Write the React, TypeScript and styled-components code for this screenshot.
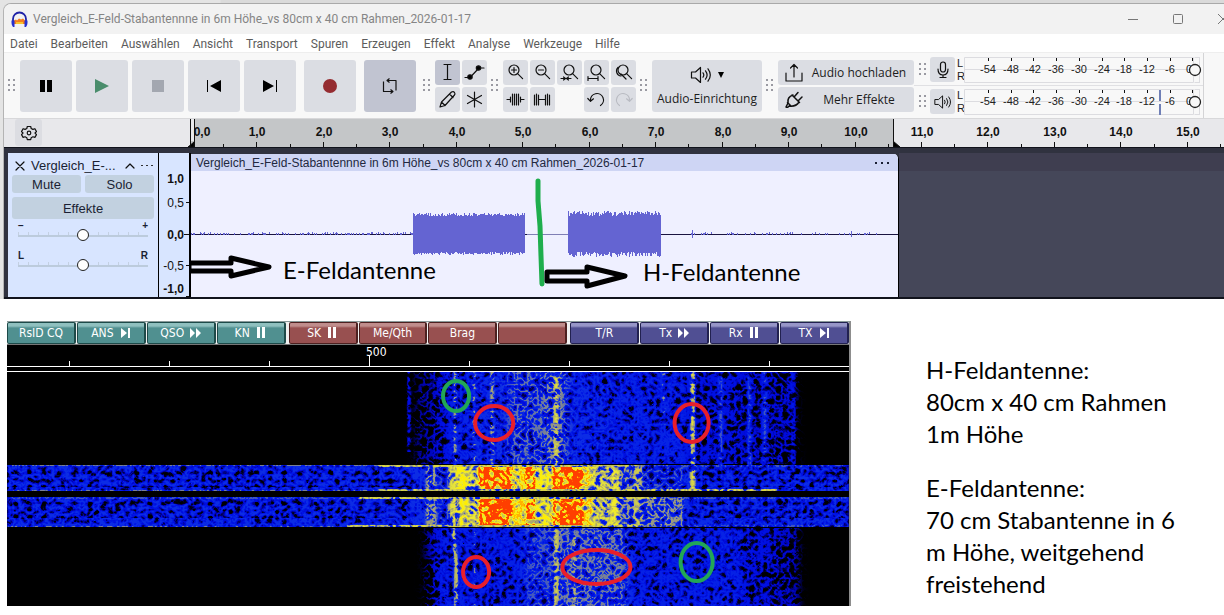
import React from "react";
import styled, { createGlobalStyle, css } from "styled-components";

const Global = createGlobalStyle`
  * { box-sizing: border-box; }
  body { margin: 0; background: #fff; font-family: "Open Sans", "Noto Sans", sans-serif; }
  button { font: inherit; color: inherit; border: 0; padding: 0; margin: 0; background: none; }
  svg { display: block; flex: none; }
`;

const ARIAL = '"Liberation Sans", Arial, sans-serif';

const Page = styled.div`
  overflow: hidden;
  background: #fff;
`;
const Desktop = styled.div`
  padding: 3px 0 0 3px;
  background: linear-gradient(90deg, #e4e4e4 220px, #dadada 221px);
`;
const Window = styled.section`
  border-top: 1px solid #a9a9a9;
  border-left: 1px solid #b4b4b4;
  border-top-left-radius: 8px;
  overflow: hidden;
  background: #f8f8f8;
`;
const TitleBar = styled.header`
  display: flex;
  align-items: center;
  height: 30px;
  padding-left: 7px;
  background: #f2f2f2;
  color: #858585;
  font-size: 12px;
  white-space: nowrap;
`;
const Title = styled.h1`
  flex: 1;
  margin: 0 0 0 5px;
  font: inherit;
  font-family: Roboto, sans-serif;
`;
const WindowButtons = styled.div`
  display: flex;
  gap: 29px;
  margin-right: -7px;
`;
const MenuBar = styled.nav`
  display: flex;
  gap: 13px;
  height: 19px;
  padding-left: 6px;
  background: #fff;
  color: #5c5c5c;
  font-family: Roboto, sans-serif;
  font-size: 12px;
  line-height: 20px;
  border-bottom: 1px solid #eee;
`;
const Toolbar = styled.div`
  display: flex;
  height: 65px;
  padding-top: 7px;
  background: #f8f8f8;
  color: #1c1c1c;
  font-size: 12px;
`;
const Grip = styled.span<{ $short?: boolean }>`
  flex: none;
  width: 8px;
  height: 13px;
  margin: ${(p) => (p.$short ? "6px 3px 0 5px" : "19px 4px 0 4px")};
  background: radial-gradient(circle at 1px 1px, #9a9aa2 1px, transparent 1px) 0 0 / 5px 5px;
`;
const TransportButton = styled.button<{ $active?: boolean }>`
  display: grid;
  place-items: center;
  flex: none;
  width: 52px;
  height: 52px;
  border-radius: 3px;
  background: ${(p) => (p.$active ? "#c1c4d1" : "#dbdde3")};
`;
const Transport = styled.div`
  display: flex;
  gap: 4px;
  margin-right: 3px;
  & > :nth-child(n + 6) { margin-left: 4px; }
`;
const ToolGrid = styled.div<{ $cols: number }>`
  display: grid;
  flex: none;
  grid-template-columns: repeat(${(p) => p.$cols}, 25px);
  grid-auto-rows: 25px;
  gap: 2px;
`;
const ToolButton = styled.button<{ $active?: boolean }>`
  display: grid;
  place-items: center;
  width: 25px;
  height: 25px;
  border-radius: 3px;
  background: ${(p) => (p.$active ? "#c1c4d1" : "#dbdde3")};
`;
const AudioSetup = styled.button`
  display: flex;
  flex-direction: column;
  align-items: center;
  justify-content: space-between;
  flex: none;
  width: 110px;
  height: 52px;
  padding: 6px 0 5px;
  border-radius: 3px;
  background: #dbdde3;
  white-space: nowrap;
`;
const AudioIcons = styled.span`
  display: flex;
  align-items: center;
  gap: 6px;
`;
const ShareColumn = styled.div`
  display: flex;
  flex-direction: column;
  gap: 2px;
  flex: none;
  width: 136px;
`;
const ShareButton = styled.button`
  display: flex;
  align-items: center;
  height: 25px;
  padding-left: 6px;
  border-radius: 3px;
  background: #dbdde3;
  white-space: nowrap;
  & > span { flex: 1; text-align: center; }
`;
const Meters = styled.div`
  flex: none;
  width: 290px;
  height: 65px;
  margin-top: -7px;
  border-right: 1px solid #d4d4d6;
`;
const MeterRow = styled.div`
  display: flex;
  height: 33px;
  padding-top: 4px;
  border-bottom: 1px solid #e0e0e3;
  &:last-child { height: 32px; border-bottom: 0; padding-top: 3px; }
`;
const Channels = styled.span`
  width: 9px;
  padding-left: 2px;
  font: 11px/13px ${ARIAL};
`;
const RulerRow = styled.div`
  display: flex;
  height: 30px;
  background: #e8e8eb;
  border-top: 1px solid #d8d8da;
  border-bottom: 1px solid #11131c;
`;
const RulerCorner = styled.div`
  flex: none;
  width: 182px;
  padding-left: 11px;
`;
const GearButton = styled.button`
  display: grid;
  place-items: center;
  width: 27px;
  height: 27px;
  border-radius: 3px;
  background: #dcdde2;
`;
const Ruler = styled.svg`
  flex: 1;
  min-width: 0;
  height: 28px;
  font: bold 12px ${ARIAL};
`;
const TrackArea = styled.div`
  display: flex;
  height: 151px;
  padding: 5px 0 0 4px;
  background: #30323f;
  border-bottom: 2px solid #11131c;
  font-family: ${ARIAL};
`;
const TrackPanel = styled.div`
  flex: none;
  width: 151px;
  padding: 3px 4px 0;
  background: #d8e5ff;
  border-right: 1px solid #000;
  color: #1a1f33;
  font-size: 13px;
`;
const TrackHead = styled.div`
  display: flex;
  align-items: center;
  height: 19px;
  gap: 6px;
  padding: 0 1px 0 3px;
  font-size: 13px;
  & > span { flex: 1; white-space: nowrap; }
`;
const TrackButtons = styled.div`
  display: grid;
  grid-template-columns: 1fr 1fr;
  gap: 4px;
`;
const TrackButton = styled.button<{ $wide?: boolean }>`
  height: 18px;
  border-radius: 3px;
  background: #c2d1e0;
  ${(p) => p.$wide && css`grid-column: span 2; height: 22px;`}
`;
const SliderBlock = styled.label`
  display: block;
  height: 30px;
  margin: 0 3px;
  padding-top: 1px;
`;
const SliderEnds = styled.span`
  display: flex;
  justify-content: space-between;
  height: 8px;
  padding: 0 3px;
  font: bold 10px/12px ${ARIAL};
`;
const Slider = styled.input`
  appearance: none;
  display: block;
  width: 100%;
  height: 13px;
  margin: 0;
  background:
    linear-gradient(#bccbdc, #bccbdc) 3px 7px / calc(100% - 6px) 2px no-repeat,
    repeating-linear-gradient(90deg, #c3d0e2 0 1px, transparent 1px 10px) 3px 4px / calc(100% - 6px) 4px no-repeat;
  &::-webkit-slider-thumb {
    appearance: none;
    width: 12px;
    height: 12px;
    border: 1px solid #222;
    border-radius: 50%;
    background: #fff;
  }
`;
const Scale = styled.svg`
  width: 32px;
  height: 144px;
  background: #d8e5ff;
  font-size: 12px;
  border-right: 2px solid #000;
`;
const Clip = styled.div`
  flex: none;
  width: 708px;
  margin-top: 1px;
  border-right: 1px solid #000;
  border-top-right-radius: 5px;
  overflow: hidden;
  background: #eff0ff;
`;
const ClipHead = styled.div`
  display: flex;
  align-items: center;
  justify-content: space-between;
  height: 17px;
  padding: 0 9px 0 5px;
  background: #ced5f4;
  color: #222840;
  font-size: 12px;
  white-space: nowrap;
`;
const ClipBody = styled.svg`
  width: 708px;
  height: 126px;
  font: 24px Lato, sans-serif;
`;
const Empty = styled.div`
  flex: 1;
  background: linear-gradient(#3f3e50 18px, #454759 18px);
`;

const Lower = styled.div`
  display: grid;
  grid-template-columns: minmax(0, 844fr) minmax(0, 373fr);
  align-items: start;
  padding: 22px 0 9px 7px;
`;
const Fldigi = styled.section`
  border-top: 1px solid #8a9a9a;
  border-right: 2px solid #8d8d8d;
`;
const MacroBar = styled.div`
  display: grid;
  grid-template-columns: repeat(3, 1fr);
  gap: 3px;
  height: 23px;
  background: #f0f0f0;
  border-bottom: 1px solid #777;
`;
const MacroGroup = styled.div`
  display: grid;
  grid-template-columns: repeat(4, 1fr);
  gap: 1px;
`;
const MacroButton = styled.button<{ $tone: string; $edge: string; $light: string }>`
  display: flex;
  align-items: center;
  justify-content: center;
  gap: 6px;
  height: 22px;
  border: 1px solid ${(p) => p.$edge};
  border-right-width: 2px;
  border-radius: 2px;
  background: linear-gradient(${(p) => p.$light} 3px, ${(p) => p.$tone} 5px);
  color: #fff;
  font: 12px "DejaVu Sans Condensed", "DejaVu Sans", sans-serif;
  white-space: nowrap;
`;
const FreqScale = styled.svg`
  width: 100%;
  height: 27px;
  background: #000;
  font: 12px "DejaVu Sans Condensed", "DejaVu Sans", sans-serif;
`;
const Fall = styled.svg`
  width: 100%;
  height: 234px;
  background: #000;
`;
const Notes = styled.aside`
  padding: 33px 24px 0 75px;
  color: #000;
  font: 24px/32px Lato, sans-serif;
  & > p { margin: 0 0 22px; }
`;

const line = { fill: "none", stroke: "#111", strokeWidth: 1.2, strokeLinecap: "round" as const, strokeLinejoin: "round" as const };

const Speaker = ({ size = 22 }: { size?: number }) => (
  <svg width={size} height={18} viewBox="0 0 22 18" {...line}>
    <path d="M1.5 6h4l5-4.500v15l-5-4.500h-4z" />
    <path d="M13 6.800q1.600 2.200 0 4.400M15.500 4.800q3.200 4.200 0 8.400M18 2.800q4.600 6.200 0 12.400" />
  </svg>
);

const Magnifier = ({ children, shift = 0 }: { children?: React.ReactNode; shift?: number }) => (
  <svg width="21" height="21" viewBox="0 0 21 21" {...line}>
    <circle cx={9 + shift} cy="8" r="5" />
    <path d={`M${12.6 + shift} 11.600l5 5`} />
    {children}
  </svg>
);

/* Deterministic pseudo random numbers, so each paint gives the same trace. */
const random = (seed: number) => {
  let s = seed;
  return () => {
    s = (s * 16807) % 2147483647;
    return s / 2147483647;
  };
};

const burst = (from: number, to: number, half: number, jitter: number, seed: number) => {
  const r = random(seed);
  let d = "";
  for (let x = from; x < to; x++) {
    const up = half - Math.round(r() * jitter);
    const down = half - Math.round(r() * jitter);
    d += `M${x} ${63 - up}h1V${63 + down}h-1z`;
  }
  return d;
};

const hum = (from: number, to: number, density: number, seed: number) => {
  const r = random(seed);
  let d = "";
  for (let x = from; x < to; x++) if (r() < density) d += `M${x} ${r() < 0.2 ? 61 : 62}h1v2h-1z`;
  return d;
};

const Meter = ({ mark }: { mark?: boolean }) => (
  <svg width="238" height="26" viewBox="0 0 238 26" fontFamily={ARIAL} fontSize="11">
    <path d="M.5 .5h229v25H.5zM235.500 0v26M1 12.500h228M230.500 .5h5v25h-5" fill="none" stroke="#dcdce0" />
    {[-54, -48, -42, -36, -30, -24, -18, -12, -6, 0].map((v, i) => {
      const x = Math.round(24 + i * 22.7);
      return (
        <g key={v}>
          <path d={`M${x + 0.5} 1v3`} stroke="#111" />
          <text x={v === 0 ? x - 3 : x} y="16" textAnchor="middle" fill="#222">{v}</text>
        </g>
      );
    })}
    {mark && <path d="M196 1v11M196 15v11" stroke="#6f7fb6" strokeWidth="2" />}
    <circle cx="231" cy="13" r="5.500" fill="#f8f8f8" stroke="#222" strokeWidth="1.300" />
  </svg>
);

const menus = ["Datei", "Bearbeiten", "Auswählen", "Ansicht", "Transport", "Spuren", "Erzeugen", "Effekt", "Analyse", "Werkzeuge", "Hilfe"];

const glyphs: Record<string, React.ReactNode> = {
  next: <path d="M1 1l6 5-6 5zM8 1h2v10H8z" />,
  fast: <path d="M0 1l5 5-5 5zM6 1l5 5-5 5z" />,
  pause: <path d="M1 0h3v11H1zM6 0h3v11H6z" />,
};
const groups = [
  { tone: "#509090", light: "#8fc0bf", edge: "#1d4a49", items: [["RsID CQ"], ["ANS", "next"], ["QSO", "fast"], ["KN", "pause"]] },
  { tone: "#985050", light: "#c08d8c", edge: "#4d2020", items: [["SK", "pause"], ["Me/Qth"], ["Brag"], [""]] },
  { tone: "#504f93", light: "#9796c8", edge: "#222150", items: [["T/R"], ["Tx", "fast"], ["Rx", "pause"], ["TX", "next"]] },
];

/* Grey level stands for signal strength; the filter adds grain and maps it to colour. */
const level = (v: number) => `rgb(${v * 255},${v * 255},${v * 255})`;
type Band = [number, number, number, number, number];
const idle: Band[] = [
  // above the bursts
  [406, 0, 30, 92, 0.22], [428, 0, 20, 92, 0.31],
  [440, 0, 240, 92, 0.4], [463, 0, 137, 92, 0.43], [500, 0, 48, 92, 0.49], [538, 0, 20, 92, 0.52],
  [678, 0, 55, 92, 0.32], [733, 0, 56, 92, 0.27],
  // below the bursts
  [415, 156, 16, 78, 0.22], [428, 156, 310, 78, 0.39], [515, 156, 45, 78, 0.47], [545, 156, 75, 78, 0.5],
  [735, 156, 30, 78, 0.32], [764, 156, 28, 78, 0.25],
];
const bursts = [[93, 26], [125, 30]].flatMap(([y, h]): Band[] => [
  [0, y, 840, h, 0.43], [418, y, 10, h, 0.54], [428, y, 13, h, 0.46], [441, y, 7, h, 0.68], [448, y, 12, h, 0.78], [460, y, 10, h, 0.7],
  [470, y, 5, h, 0.93], [475, y, 29, h, 0.99], [504, y, 13, h, 0.81], [517, y, 10, h, 0.93], [527, y, 16, h, 0.78],
  [543, y, 8, h, 0.9], [551, y, 24, h, 0.99], [575, y, 10, h, 0.82], [585, y, 18, h, 0.68], [603, y, 8, h, 0.72],
  [611, y, 14, h, 0.53], [625, y, 8, h, 0.64], [633, y, 42, h, y > 100 ? 0.52 : 0.47],
]);
const Bands = ({ items }: { items: Band[] }) => (
  <>{items.map(([x, y, w, h, v], i) => <rect key={i} x={x} y={y} width={w} height={h} fill={level(v)} />)}</>
);

const Waterfall = () => (
  <Fall viewBox="0 0 840 234" preserveAspectRatio="none" role="img" aria-label="Wasserfall">
    <defs>
      <filter id="soft" x="0" y="0" width="840" height="234" filterUnits="userSpaceOnUse" colorInterpolationFilters="sRGB">
        <feGaussianBlur stdDeviation="5 0" />
      </filter>
      <filter id="spectrum" x="0" y="0" width="840" height="234" filterUnits="userSpaceOnUse" colorInterpolationFilters="sRGB">
        <feGaussianBlur in="SourceGraphic" stdDeviation="1 0.3" result="signal" />
        <feTurbulence type="turbulence" baseFrequency="0.15 0.15" numOctaves={2} seed={7} />
        <feColorMatrix values="-2.100 0 0 0 1.250  -2.100 0 0 0 1.250  -2.100 0 0 0 1.250  0 0 0 0 1" result="grain" />
        <feComposite in="signal" in2="grain" operator="arithmetic" k1={0} k2={1.15} k3={0.42} k4={-0.42} />
        <feComponentTransfer>
          <feFuncR type="table" tableValues="0 0 0 0 0 .05 .6 .76 .93 1 1" />
          <feFuncG type="table" tableValues="0 0 0 .04 .09 .18 .6 .75 .92 .93 .25" />
          <feFuncB type="table" tableValues="0 .1 .5 .86 .9 .9 .5 .35 .2 0 0" />
        </feComponentTransfer>
      </filter>
      <pattern id="lattice" width="15" height="31" patternUnits="userSpaceOnUse" y="93">
        <path d="M4 7l3-2 4 2-1 3-3-1-3 1zM0 14l3 2-3 2zM15 14l-3 2 3 2zM7 13l2 1-2 2-2-2zM4 22l4-3 4 3zM0 21l2 2h-2z" fill="#000" opacity="0.6" />
      </pattern>
    </defs>
    <g filter="url(#spectrum)">
      <rect width="840" height="234" fill="#000" />
      <g filter="url(#soft)"><Bands items={idle} /></g>
      <path d="M401 0v80M784 0v93M715 160v74" stroke={level(0.4)} strokeWidth="3" />
      <path d="M712 0v93M741 0v93M756 0v93" stroke={level(0.47)} strokeWidth="5" />
      <Bands items={bursts} />
      <path d="M447 0v93M484 0v93" stroke={level(0.64)} strokeWidth="2" strokeDasharray="30 4 12 7" />
      <path d="M466 0v93M467 160v74M655 0v60" stroke={level(0.6)} strokeWidth="2" strokeDasharray="5 7" />
      <path d="M548 0v93" stroke={level(0.68)} strokeWidth="4" strokeDasharray="18 5 6 4" />
      <path d="M684 0v119" stroke={level(0.7)} strokeWidth="4" />
      <path d="M445 156l3 35v43M548 156v78" stroke={level(0.68)} strokeWidth="3" />
      <path d="M566 165v69" stroke={level(0.6)} strokeWidth="3" strokeDasharray="12 5" />
      <rect y="93" width="400" height="62" fill="url(#lattice)" />
      <rect x="690" y="93" width="150" height="62" fill="url(#lattice)" />
      <path d="M370 94h260M370 118h400M350 126h300M340 154h290" stroke={level(0.66)} strokeWidth="2" />
      <path d="M0 93.500h370M0 118.500h370M0 126h340M0 154.500h340M630 94h210M650 126h190M630 154h210" stroke={level(0.5)} />
      <path d="M0 122.500h840" stroke="#000" strokeWidth="5" />
    </g>
    <g fill="none" strokeWidth="4">
      <g stroke="#22a656">
        <ellipse cx="448" cy="24" rx="13" ry="15" />
        <ellipse cx="688" cy="190" rx="16" ry="19" />
      </g>
      <g stroke="#e81f2b">
        <ellipse cx="486" cy="51" rx="19" ry="17" />
        <ellipse cx="683" cy="51" rx="17" ry="19" />
        <ellipse cx="468" cy="200" rx="13" ry="15" />
        <ellipse cx="588" cy="195" rx="34" ry="17" />
      </g>
    </g>
  </Fall>
);

const tools = [
  ["Zoom +", <Magnifier><path d="M6.500 8h5M9 5.500v5" /></Magnifier>],
  ["Zoom -", <Magnifier><path d="M6.500 8h5" /></Magnifier>],
  ["Auswahl", <Magnifier shift={1}><path d="M2 16.500h4M8 16.500h4M4.500 15l2 1.500-2 1.500M9.500 15l-2 1.500 2 1.500" /></Magnifier>],
  ["Projekt", <Magnifier shift={1}><path d="M2 16.500h10M2 14.500v4M12 14.500v4" /></Magnifier>],
  ["Umschalten", <Magnifier shift={1}><path d="M5 5.500a5 5 0 0 0 3 8.500M8 12l5 5" /></Magnifier>],
  ["Trimmen", <svg width="21" height="21" viewBox="0 0 21 21" {...line}><path d="M2 10.500h3M16 10.500h3M5.500 8v5M7.500 5v11M9.500 5v11M11.500 5v11M13.500 5v11M15.500 8v5" /></svg>],
  ["Stille", <svg width="21" height="21" viewBox="0 0 21 21" {...line}><path d="M2.500 6v10M4.500 5v11M6.500 6v10M6.500 10.500h7M13.500 6v10M15.500 5v11M17.500 6v10" /></svg>],
  null,
  ["Rückgängig", <svg width="21" height="21" viewBox="0 0 21 21" {...line}><path d="M4.500 11.500a6.500 6.500 0 1 1 10 5M1.800 9.500l2.700 2.800 3-2.500" /></svg>],
  ["Wiederholen", <svg width="21" height="21" viewBox="0 0 21 21" {...line} stroke="#b9bbc2"><path d="M16.500 11.500a6.500 6.500 0 1 0-10 5M19.200 9.500l-2.700 2.800-3-2.500" /></svg>],
] as ([string, React.ReactNode] | null)[];

export default function App() {
  return (
    <Page>
      <Global />
      <Desktop>
        <Window>
          <TitleBar>
            <svg width="17" height="17" viewBox="0 0 17 17">
              <path d="M3 9.500l2-1 1 1 2-2 2 1 2-1 2 2v3.500H3z" fill="#f47b20" />
              <path d="M5 11h7v2H5z" fill="#f9c32c" />
              <path d="M2 11V8a6.500 6.500 0 0 1 13 0v3" fill="none" stroke="#2024a8" strokeWidth="1.800" />
              <path d="M.5 9.500h3V16H2Q.5 14 .5 12zM16.500 9.500h-3V16H15q1.500-2 1.500-4z" fill="#2530d0" />
            </svg>
            <Title>Vergleich_E-Feld-Stabantennne in 6m Höhe_vs 80cm x 40 cm Rahmen_2026-01-17</Title>
            <WindowButtons>
              <button aria-label="Minimieren"><svg width="16" height="16" fill="none" stroke="#777"><path d="M3 8.500h10" /></svg></button>
              <button aria-label="Maximieren"><svg width="16" height="16" fill="none" stroke="#777"><rect x="3.500" y="3.500" width="9" height="9" rx="1" /></svg></button>
              <button aria-label="Schließen"><svg width="16" height="16" fill="none" stroke="#777"><path d="M3 3l10 10M13 3L3 13" /></svg></button>
            </WindowButtons>
          </TitleBar>
          <MenuBar>{menus.map((m) => <button key={m}>{m}</button>)}</MenuBar>
          <Toolbar>
            <Grip />
            <Transport>
              <TransportButton aria-label="Pause"><svg width="14" height="14"><path d="M1 1h5v12H1zM8 1h5v12H8z" /></svg></TransportButton>
              <TransportButton aria-label="Wiedergabe"><svg width="14" height="14"><path d="M0 0l14 7-14 7z" fill="#4a8d6c" /></svg></TransportButton>
              <TransportButton aria-label="Stopp"><svg width="12" height="12"><path d="M0 0h12v12H0z" fill="#a3a7b0" /></svg></TransportButton>
              <TransportButton aria-label="Zum Anfang"><svg width="14" height="14"><path d="M0 1h1v12H0zM14 1v12L3 7z" /></svg></TransportButton>
              <TransportButton aria-label="Zum Ende"><svg width="14" height="14"><path d="M13 1h1v12h-1zM0 1v12l11-6z" /></svg></TransportButton>
              <TransportButton aria-label="Aufnahme"><svg width="14" height="14"><circle cx="7" cy="7" r="7" fill="#952c31" /></svg></TransportButton>
              <TransportButton aria-label="Schleife" $active>
                <svg width="16" height="16" viewBox="0 0 16 16" {...line} strokeLinecap="butt"><path d="M5.500 2.500H14v10M10.500 13.500H1.500v-10M7.500 .5l-2.500 2 2.500 2M8.500 11.500l2.500 2-2.500 2" /></svg>
              </TransportButton>
            </Transport>
            <Grip />
            <ToolGrid $cols={2}>
              <ToolButton aria-label="Auswahlwerkzeug" $active><svg width="19" height="19" {...line}><path d="M6 1.500h7M6 16.500h7M9.500 1.500v15" /></svg></ToolButton>
              <ToolButton aria-label="Hüllkurve"><svg width="21" height="21" {...line}><path d="M1 15.500h5L15 6h5" /><circle cx="6" cy="15" r="2.200" fill="#000" /><circle cx="14.500" cy="6" r="2.200" fill="#000" /></svg></ToolButton>
              <ToolButton aria-label="Zeichnen"><svg width="19" height="19" {...line}><path d="M2 17l1.500-5L13.500 2q2-1 3 .5t0 2.500L7 15.500zM3.500 12L7 15.500M11.500 4l3.500 3.500" /></svg></ToolButton>
              <ToolButton aria-label="Multi-Werkzeug"><svg width="19" height="19" {...line}><path d="M9.500 2v15M2.500 5.500l14 8M16.500 5.500l-14 8" /></svg></ToolButton>
            </ToolGrid>
            <Grip />
            <ToolGrid $cols={5}>
              {tools.map((t, i) => (t ? <ToolButton key={i} aria-label={t[0]}>{t[1]}</ToolButton> : <span key={i} />))}
            </ToolGrid>
            <Grip />
            <AudioSetup>
              <AudioIcons><Speaker /><svg width="6" height="6"><path d="M0 0h6L3 6z" /></svg></AudioIcons>
              <span>Audio-Einrichtung</span>
            </AudioSetup>
            <Grip />
            <ShareColumn>
              <ShareButton>
                <svg width="20" height="20" {...line}><path d="M2 10v8h16v-8M10 14V2M6.500 5L10 1.500 13.500 5" /></svg>
                <span>Audio hochladen</span>
              </ShareButton>
              <ShareButton>
                <svg width="20" height="20" {...line} strokeWidth="1.500"><path d="M8 5l7.500 7.500M9 5q-6 2-5 8l-2 4q2 1 3-1 7 1 10-4M10.500 6.500L14 2.500M14.500 10.500L18 7M3.500 12.500L7 16" /></svg>
                <span>Mehr Effekte</span>
              </ShareButton>
            </ShareColumn>
            <Meters>
              <MeterRow>
                <Grip $short />
                <ToolButton aria-label="Aufnahmepegel">
                  <svg width="16" height="18" {...line}><rect x="5.500" y="1" width="5" height="10" rx="2.500" /><path d="M3 8q0 6 5 6t5-6M8 14v2.500M5 16.500h6" /></svg>
                </ToolButton>
                <Channels>L<br />R</Channels>
                <Meter />
              </MeterRow>
              <MeterRow>
                <Grip $short />
                <ToolButton aria-label="Wiedergabepegel"><Speaker size={18} /></ToolButton>
                <Channels>L<br />R</Channels>
                <Meter mark />
              </MeterRow>
            </Meters>
          </Toolbar>
          <RulerRow>
            <RulerCorner>
              <GearButton aria-label="Zeitleistenoptionen">
                <svg width="16" height="16" viewBox="0 0 16 16" {...line}>
                  <circle cx="8" cy="8" r="1.800" />
                  <path d="M6.300 1.500h3.400l.5 2 1.700.9 2-.7 1.600 2.900-1.500 1.400 1.500 1.600-1.600 2.800-2-.6-1.700.9-.5 1.900H6.300l-.5-1.900-1.700-.9-2 .6L.5 9.600 2 8 .5 6.600l1.600-2.900 2 .7 1.700-.9z" />
                </svg>
              </GearButton>
            </RulerCorner>
            <Ruler>
              <rect x="5" width="703" height="28" fill="#c4c6c8" />
              <path d="M4.500 0v28M8.500 0v28M707.500 0v28M707 22l7 6h-7M2 28l6-5v5z" stroke="#111" />
              <path d="M5 0h3v22H5z" fill="#e8e8eb" />
              {Array.from({ length: 32 }, (_, i) => {
                const x = Math.round(4 + (i * 66.45) / 2);
                return (
                  <g key={i}>
                    {i > 0 && <path d={`M${x + 0.5} 28v-${i % 2 ? 3 : 5}`} stroke="#111" />}
                    {i % 2 === 0 && <text x={i ? x + 1 : 16} y="17" textAnchor="middle" fill="#111">{i / 2},0</text>}
                  </g>
                );
              })}
            </Ruler>
          </RulerRow>
          <TrackArea>
            <TrackPanel>
              <TrackHead>
                <svg width="10" height="10" {...line}><path d="M1 1l8 8M9 1L1 9" /></svg>
                <span>Vergleich_E-...</span>
                <svg width="10" height="6" {...line}><path d="M1 5l4-4 4 4" /></svg>
                <svg width="12" height="3" fill="#333"><path d="M0 1h2v1H0zM5 1h2v1H5zM10 1h2v1h-2z" /></svg>
              </TrackHead>
              <TrackButtons>
                <TrackButton>Mute</TrackButton>
                <TrackButton>Solo</TrackButton>
                <TrackButton $wide>Effekte</TrackButton>
              </TrackButtons>
              <SliderBlock>
                <SliderEnds><span>−</span><span>+</span></SliderEnds>
                <Slider type="range" aria-label="Lautstärke" />
              </SliderBlock>
              <SliderBlock>
                <SliderEnds><span>L</span><span>R</span></SliderEnds>
                <Slider type="range" aria-label="Balance" />
              </SliderBlock>
            </TrackPanel>
            <Scale>
              {([["1,0", 30, 1], ["0,5", 54, 0], ["0,0", 86, 1], ["-0,5", 117, 0], ["-1,0", 140, 1]] as [string, number, number][]).map(([t, y, b]) => (
                <text key={t} x="25" y={y} textAnchor="end" fontWeight={b ? "bold" : "normal"} fill="#111">{t}</text>
              ))}
              <path d="M27 49.500h4M25 81.500h6M27 112.500h4M27 143.500h4" stroke="#111" />
            </Scale>
            <Clip>
              <ClipHead>
                <span>Vergleich_E-Feld-Stabantennne in 6m Höhe_vs 80cm x 40 cm Rahmen_2026-01-17</span>
                <svg width="14" height="2"><path d="M0 0h2v2H0zM6 0h2v2H6zM12 0h2v2h-2z" fill="#1a1f33" /></svg>
              </ClipHead>
              <ClipBody>
                <path d="M0 63.500h708" stroke="#1a1440" />
                <path d="M336 63.500h41" stroke="#7f7fb5" />
                <path d={burst(222, 334, 21, 3, 11) + burst(377, 470, 23, 5, 29) + hum(0, 222, 0.35, 5) + hum(500, 700, 0.18, 17) + "M501 59h1v8h-1zM660 60h1v6h-1z"} fill="#6464d2" />
                <path d="M347 10v20l2 25 1 30 1 28" fill="none" stroke="#1fae4d" strokeWidth="5" strokeLinecap="round" />
                <g fill="none" stroke="#000" strokeWidth="5" strokeLinejoin="round">
                  <path d="M-2 92h42v-5l38 9-38 9v-5H-2z" />
                  <path d="M356 101h40v-5l38 9-38 10v-5h-40z" />
                </g>
                <text x="92" y="108">E-Feldantenne</text>
                <text x="452" y="110">H-Feldantenne</text>
              </ClipBody>
            </Clip>
            <Empty />
          </TrackArea>
        </Window>
      </Desktop>
      <Lower>
        <Fldigi>
          <MacroBar>
            {groups.map((g) => (
              <MacroGroup key={g.tone}>
                {g.items.map(([label, glyph], i) => (
                  <MacroButton key={i} $tone={g.tone} $edge={g.edge} $light={g.light} aria-label={label || "Makro"}>
                    {label}
                    {glyph && <svg width="11" height="12" fill="#fff">{glyphs[glyph]}</svg>}
                  </MacroButton>
                ))}
              </MacroGroup>
            ))}
          </MacroBar>
          <FreqScale>
            <path d="M0 21.500h900M0 26.500h900M62.500 21v-5M162.500 21v-5M262.500 21v-5M362.500 21v-10M462.500 21v-5M562.500 21v-5M662.500 21v-5M762.500 21v-5" stroke="#fff" />
            <text x="359" y="11" fill="#fff">500</text>
          </FreqScale>
          <Waterfall />
        </Fldigi>
        <Notes>
          <p>H-Feldantenne:<br />80cm x 40 cm Rahmen<br />1m Höhe</p>
          <p>E-Feldantenne:<br />70 cm Stabantenne in 6 m Höhe, weitgehend freistehend</p>
        </Notes>
      </Lower>
    </Page>
  );
}
